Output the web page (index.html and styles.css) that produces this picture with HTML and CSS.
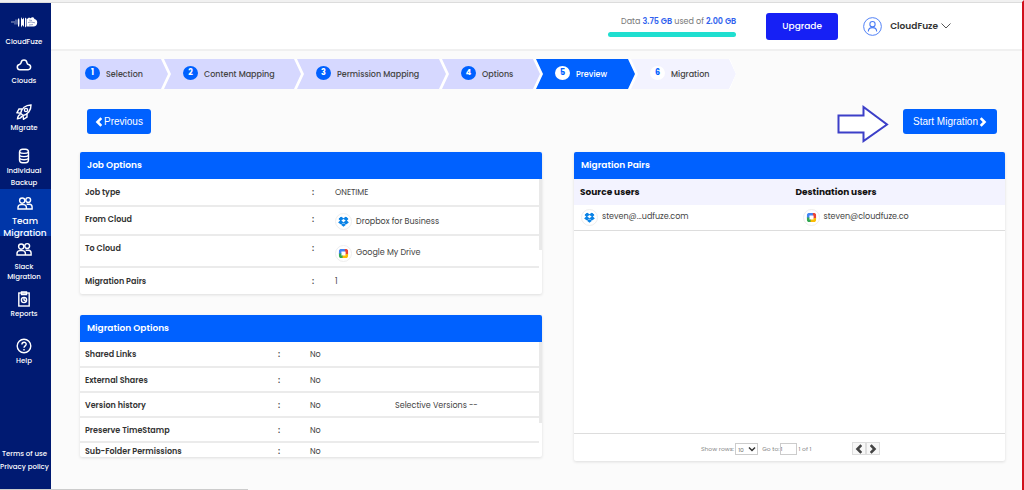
FILE: index.html
```html
<!DOCTYPE html>
<html lang="en">
<head>
<meta charset="utf-8">
<meta name="viewport" content="width=device-width, initial-scale=1">
<title>CloudFuze - Preview</title>
<link rel="stylesheet" href="styles.css">
</head>
<body>
<svg class="sprite" aria-hidden="true">
  <symbol id="team" viewBox="0 0 16 16">
    <g fill="none" stroke="currentColor" stroke-width="1.4">
      <circle cx="5.2" cy="5.6" r="2.6"/><circle cx="11.2" cy="5" r="2.4"/>
      <path d="M1 14v-1.400c0-2 1.400-3 3-3h2.400c1.800 0 3 1 3 3V14zM9.600 9.200h2.800c1.700 0 2.700 1 2.700 2.800V14H9.500"/>
    </g>
  </symbol>
  <symbol id="dropbox" viewBox="0 0 12 12">
    <path fill="#0b83e6" d="M3.300.6 6 2.500 8.700.6 12 3 9.600 5 12 7.200 8.700 9.300 6 7.300 3.300 9.300 0 7.200 2.400 5 0 3z"/>
    <path fill="#0b83e6" d="M3.300 9.500 6 7.800l2.700 1.700L6 11.700z"/>
    <path fill="#fff" d="M6 3.200 8.400 5 6 6.700 3.600 5z"/>
  </symbol>
  <symbol id="drive" viewBox="0 0 12 12">
    <path fill="#4285f4" d="M1 1H8V3.700H3.700v3H1z"/>
    <path fill="#ea4335" d="M7.500 1H11V7H8.300V3.700h-.8z"/>
    <path fill="#34a853" d="M1 6h2.700v2.300H5.500V11H1z"/>
    <path fill="#fbbc04" d="M5 8.300h3.300V6.500H11V11H5z"/>
  </symbol>
  <symbol id="left" viewBox="0 0 8 10"><path d="M6.300 1.200 2.500 5 6.300 8.800" fill="none" stroke="currentColor" stroke-width="2.600"/></symbol>
  <symbol id="right" viewBox="0 0 8 10"><path d="M1.700 1.200 5.500 5 1.700 8.800" fill="none" stroke="currentColor" stroke-width="2.600"/></symbol>
</svg>

<div class="app">
  <nav class="sidebar">
    <a class="nav brand" href="#">
      <svg class="logo" viewBox="0 0 28 14" fill="currentColor">
        <path d="M1 6.500h9v1H1zM4 8.500h6v.7H4zM5 4.800h5v.7H5z" opacity=".6"/>
        <path d="M8 3.500h1.200v8H8zM11 2l1.500 2.500L14 2.500v9.500l-1.500-2L11 12.500zM15 2.500l1.500 1.300v7.500L15 12.500z"/>
        <path d="M17 11.500V4l2-1.500 1.500.8C22 1.500 24 2 24.400 4c2 .3 2.800 2 2.800 3.500 0 2.500-1.500 4-3.700 4z"/>
        <path d="M18 7.500l3-.5 4 .8M19 5l3 .5M19 10l4-.4" fill="none" stroke="#001a72" stroke-width=".4"/>
      </svg>
      <span>CloudFuze</span>
    </a>
    <a class="nav nav-clouds" href="#">
      <svg class="icon" viewBox="0 0 16 16"><path d="M3.800 12.800a2.700 2.700 0 0 1-.5-5.300C4.600 7 4.900 6.500 5 5.800 5.300 4 6.500 3 8 3s2.700 1 3 2.800c.1.800.5 1.300 1.600 1.700a2.700 2.700 0 0 1-.4 5.300z" fill="none" stroke="currentColor" stroke-width="1.500"/></svg>
      <span>Clouds</span>
    </a>
    <a class="nav nav-migrate" href="#">
      <svg class="icon" viewBox="0 0 16 16"><g fill="none" stroke="currentColor" stroke-width="1.400"><path d="M4.700 9.200C5.500 4.500 9.500 1.200 15 1 15.200 6.500 11.500 10.500 7 11.500z"/><circle cx="10" cy="6" r="1.600"/><path d="M6 5H3L1 8.700l3.700.5M11 10v3l-3.500 2.300L7 11.500M4.700 10.500c-1.800.3-2.900 1.900-3.200 4.200 2 0 3.900-.8 4.400-2.800"/></g></svg>
      <span>Migrate</span>
    </a>
    <a class="nav nav-backup" href="#">
      <svg class="icon" viewBox="0 0 16 16"><g fill="none" stroke="currentColor" stroke-width="1.400"><rect x="3.500" y="1.200" width="9" height="13.600" rx="3"/><path d="M3.500 4.200c1.500 1.600 7.500 1.600 9 0M3.500 7.400c1.500 1.600 7.500 1.600 9 0M3.500 10.600c1.500 1.600 7.500 1.600 9 0"/></g></svg>
      <span>Individual Backup</span>
    </a>
    <a class="nav nav-team" href="#" aria-current="page">
      <svg class="icon"><use href="#team"/></svg>
      <span>Team Migration</span>
    </a>
    <a class="nav nav-slack" href="#">
      <svg class="icon"><use href="#team"/></svg>
      <span>Slack Migration</span>
    </a>
    <a class="nav nav-reports" href="#">
      <svg class="icon" viewBox="0 0 16 16"><g fill="none" stroke="currentColor" stroke-width="1.400"><rect x="2.800" y="2" width="10.400" height="13"/><path d="M5.500 1h5v2.500h-5z"/><circle cx="8" cy="9" r="2.600"/><path d="M8 6.500V9l2 1.500"/></g></svg>
      <span>Reports</span>
    </a>
    <a class="nav nav-help" href="#">
      <svg class="icon" viewBox="0 0 16 16"><g fill="none" stroke="currentColor" stroke-width="1.400"><circle cx="8" cy="8" r="6.800"/><path d="M5.900 6.500c0-3 4.300-2.900 4.300-.2C10.200 8 8 7.800 8 9.800M8 11v1.500"/></g></svg>
      <span>Help</span>
    </a>
    <div class="legal">
      <a href="#">Terms of use</a>
      <a href="#">Privacy policy</a>
    </div>
  </nav>

  <div class="page">
    <header class="topbar">
      <div class="usage">
        <span>Data <b>3.75 GB</b> used of <b>2.00 GB</b></span>
        <div class="meter"></div>
      </div>
      <button class="upgrade" type="button">Upgrade</button>
      <button class="account" type="button">
        <svg class="avatar" viewBox="0 0 18 18" fill="none" stroke="#4a7cf5"><circle cx="9" cy="9" r="8.400" stroke-width=".9"/><circle cx="9" cy="6.800" r="2.500"/><path d="M5 13.800c.2-5 7.800-5 8 0"/></svg>
        <span>CloudFuze</span>
        <svg class="caret" viewBox="0 0 10 6"><path d="M.5.500 5 5 9.500.500" fill="none" stroke="#555"/></svg>
      </button>
    </header>

    <main>
      <ol class="steps">
        <li class="step s1"><span class="num">1</span>Selection</li>
        <li class="step s2"><span class="num">2</span>Content Mapping</li>
        <li class="step s3"><span class="num">3</span>Permission Mapping</li>
        <li class="step s4"><span class="num">4</span>Options</li>
        <li class="step s5 current" aria-current="step"><span class="num">5</span>Preview</li>
        <li class="step s6 upcoming"><span class="num">6</span>Migration</li>
      </ol>

      <div class="actions">
        <button class="btn" type="button"><svg class="chev"><use href="#left"/></svg>Previous</button>
        <svg class="pointer" viewBox="0 0 52 38"><path d="M1.500 10.500h25v-8.500L50 19.500 26.500 36V27.500h-25z" fill="#fff" stroke="#3c3fc8" stroke-width="2"/></svg>
        <button class="btn start" type="button">Start Migration<svg class="chev"><use href="#right"/></svg></button>
      </div>

      <div class="columns">
        <div class="stack">
          <section class="panel">
            <h2>Job Options</h2>
            <div class="body">
              <table class="job">
                <tr class="r1"><th scope="row">Job type</th><td class="colon">:</td><td>ONETIME</td></tr>
                <tr class="r2"><th scope="row">From Cloud</th><td class="colon">:</td><td><span class="cloud"><svg class="badge"><use href="#dropbox"/></svg>Dropbox for Business</span></td></tr>
                <tr class="r3"><th scope="row">To Cloud</th><td class="colon">:</td><td><span class="cloud"><svg class="badge"><use href="#drive"/></svg>Google My Drive</span></td></tr>
                <tr class="r4"><th scope="row">Migration Pairs</th><td class="colon">:</td><td>1</td></tr>
              </table>
              <div class="scroll"></div>
            </div>
          </section>
          <section class="panel">
            <h2>Migration Options</h2>
            <div class="body">
              <table class="options">
                <tr><th scope="row">Shared Links</th><td class="colon">:</td><td class="value">No</td><td></td></tr>
                <tr><th scope="row">External Shares</th><td class="colon">:</td><td class="value">No</td><td></td></tr>
                <tr><th scope="row">Version history</th><td class="colon">:</td><td class="value">No</td><td>Selective Versions --</td></tr>
                <tr><th scope="row">Preserve TimeStamp</th><td class="colon">:</td><td class="value">No</td><td></td></tr>
                <tr class="last"><th scope="row">Sub-Folder Permissions</th><td class="colon">:</td><td class="value">No</td><td></td></tr>
              </table>
              <div class="scroll tall"></div>
            </div>
          </section>
        </div>

        <section class="panel pairs">
          <h2>Migration Pairs</h2>
          <table class="users">
            <thead><tr><th scope="col">Source users</th><th scope="col">Destination users</th></tr></thead>
            <tbody><tr>
              <td><span class="cloud"><svg class="badge"><use href="#dropbox"/></svg>steven@...udfuze.com</span></td>
              <td><span class="cloud inset"><svg class="badge"><use href="#drive"/></svg>steven@cloudfuze.co</span></td>
            </tr></tbody>
          </table>
          <footer class="pager">
            <label for="rows">Show rows:</label>
            <span class="select"><select id="rows"><option>10</option></select><svg viewBox="0 0 8 6"><path d="M1 1.500 4 4.500 7 1.500" fill="none" stroke="#333" stroke-width="1.500"/></svg></span>
            <label class="goto" for="page">Go to:</label>
            <input id="page" type="text" value="1">
            <span class="total">1 of 1</span>
            <div class="turn">
              <button type="button" aria-label="Previous page"><svg><use href="#left"/></svg></button>
              <button type="button" aria-label="Next page"><svg><use href="#right"/></svg></button>
            </div>
          </footer>
        </section>
      </div>
    </main>
  </div>
</div>
<div class="status"></div>
</body>
</html>
```

FILE: styles.css
```css
* { box-sizing: border-box; }
body {
  margin: 0;
  min-height: 100vh;
  display: flex;
  flex-direction: column;
  background: #fbfbfb;
  border-top: 2px solid #f1f1f1;
  border-right: 2px solid #d0101c;
  font: 8px/12px Poppins, Inter, sans-serif;
  color: #444;
}
a { color: inherit; text-decoration: none; }
button, input, select { font: inherit; margin: 0; padding: 0; border: 0; }
h2, ol { margin: 0; padding: 0; }
svg { display: block; flex: none; }
.sprite { position: absolute; width: 0; height: 0; }
.app { flex: 1; display: flex; border-top: 1px solid #dcdcdc; }

/* Sidebar */
.sidebar {
  flex: none;
  width: 51px;
  display: flex;
  flex-direction: column;
  background: #001a72;
  color: #fff;
  font-size: 7px;
  font-weight: 500;
  text-align: center;
}
.nav { display: flex; flex-direction: column; align-items: center; padding-right: 3px; gap: 1px; }
.icon { width: 16px; height: 16px; }
.brand { margin-top: 12px; }
.logo { width: 28px; height: 14px; margin-bottom: 6px; }
.nav-clouds { margin-top: 9px; gap: 2px; }
.nav-migrate { margin-top: 17px; gap: 2px; }
.nav-backup { margin-top: 14px; }
.nav-team { padding: 6px 1px 0 0; gap: 4px; height: 47px; background: #0036a8; font-size: 9px; }
.nav-slack { margin-top: 5px; gap: 5px; line-height: 10px; }
.nav-reports { margin-top: 9px; }
.nav-help { margin-top: 18px; }
.legal { margin-top: auto; padding: 0 2px 17px 0; display: flex; flex-direction: column; line-height: 13px; white-space: nowrap; }

/* Top bar */
.page { flex: 1; min-width: 0; }
.topbar {
  display: flex;
  align-items: center;
  justify-content: flex-end;
  height: 48px;
  padding-right: 71px;
  background: #fff;
  border-bottom: 2px solid #f0f0f0;
}
.usage { width: 128px; text-align: right; color: #777; white-space: nowrap; }
.usage b { color: #2f62ee; font-weight: 600; }
.meter { height: 5px; margin-top: 4px; border-radius: 3px; background: #1fdfd0; }
.upgrade { width: 72px; height: 27px; margin: 0 25px 0 30px; border-radius: 3px; background: #1620f5; color: #fff; font-size: 9px; font-weight: 500; }
.account { display: flex; align-items: center; background: none; color: #333; font-weight: 600; font-size: 9px; }
.avatar { width: 19px; height: 19px; margin-right: 8px; }
.caret { width: 10px; height: 6px; margin-left: 3px; }

main { padding: 8px 17px 28px 29px; }

/* Wizard steps */
.steps {
  display: flex;
  width: max-content;
  list-style: none;
  background: #fff;
  clip-path: polygon(0 0, calc(100% - 6px) 0, 100% 50%, calc(100% - 6px) 100%, 0 100%);
}
.step {
  display: flex;
  align-items: center;
  height: 30px;
  margin-left: -4px;
  padding: 2px 0 0 19px;
  background: #d6d8ff;
  font-weight: 500;
  white-space: nowrap;
  clip-path: polygon(0 0, calc(100% - 7px) 0, 100% 50%, calc(100% - 7px) 100%, 0 100%, 7px 50%);
}
.num {
  width: 15px;
  height: 14px;
  margin: 0 6px 4px 0;
  border-radius: 50%;
  background: #0061ff;
  color: #fff;
  font-weight: 700;
  line-height: 14px;
  text-align: center;
}
.s1 { width: 88px; margin-left: 0; padding-left: 5px; clip-path: polygon(0 0, calc(100% - 7px) 0, 100% 50%, calc(100% - 7px) 100%, 0 100%); }
.s2 { width: 137px; }
.s3 { width: 149px; }
.s4 { width: 98px; }
.s5 { width: 99px; }
.s6 { width: 105px; }
.current { background: #0061ff; color: #fff; }
.upcoming { background: #f3f3ff; }
.current .num, .upcoming .num { background: #fff; color: #0061ff; }

/* Actions */
.actions { display: flex; align-items: flex-start; padding: 0 8px 0 7px; margin: 16px 0 9px; }
.btn {
  display: flex;
  align-items: center;
  gap: 1px;
  height: 25px;
  margin-top: 4px;
  padding: 0 8px;
  border-radius: 3px;
  background: #0061ff;
  color: #fff;
  font: 10px/12px "Liberation Sans", Arial, sans-serif;
}
.start { padding: 0 10px; }
.chev { width: 8px; height: 10px; }
.pointer { width: 52px; height: 38px; margin: 0 14px 0 auto; }

/* Panels */
.columns { display: grid; grid-template-columns: 462fr 431fr; gap: 32px; }
.stack { display: flex; flex-direction: column; gap: 21px; padding-bottom: 4px; }
.panel { background: #fff; border-radius: 2px; box-shadow: 0 1px 3px #ddd; overflow: hidden; }
h2 { padding: 0 7px; background: #0061ff; color: #fff; font-size: 9px; font-weight: 600; line-height: 27px; }
.body { display: flex; align-items: flex-start; }
.scroll { flex: none; width: 3px; height: 71px; background: #e9e9e9; }
.tall { height: 81px; }
table { width: 100%; border-collapse: collapse; table-layout: fixed; }
th, td { padding: 0; text-align: left; font-weight: 400; white-space: nowrap; }
.body th, .body td { padding-top: 2px; }
.body th { padding-left: 5px; color: #333; font-weight: 600; }
.body .colon { padding-left: 1px; font-weight: 600; }
.body tr + tr { border-top: 2px solid #ebebeb; }
.job th { width: 231px; }
.job .colon { width: 24px; }
.r1 { height: 27px; }
.r2 { height: 29px; }
.r2 th, .r2 .colon { padding-bottom: 4px; }
.r3 { height: 32px; }
.r3 td { padding-top: 4px; }
.r3 th, .r3 .colon { padding-top: 2px; padding-bottom: 6px; }
.r4 { height: 27px; }
.options tr { height: 25px; }
.options .last { height: 15px; line-height: 10px; vertical-align: bottom; }
.options .last th, .options .last td { padding-top: 4px; }
.options th { width: 197px; }
.options .colon { width: 33px; }
.options .value { width: 85px; }
.cloud { display: flex; align-items: center; gap: 4px; }
.inset { margin-left: 6px; }
.badge { width: 17px; height: 17px; padding: 2px; border: 1px solid #eee; border-radius: 50%; background: #fff; }

/* User pairs */
.pairs { display: flex; flex-direction: column; }
.users th { height: 26px; padding-left: 6px; background: #f3f3ff; color: #111; font-size: 9px; font-weight: 700; }
.users td { height: 25px; padding-left: 7px; border-bottom: 1px solid #ddd; }
.pager {
  display: flex;
  align-items: center;
  height: 28px;
  margin-top: auto;
  padding: 2px 0 0 127px;
  border-top: 1px solid #ddd;
  color: #888;
  font-size: 6px;
}
.select { position: relative; margin: 0 4px 0 1px; }
.select svg { position: absolute; right: 2px; top: 3px; width: 8px; height: 6px; pointer-events: none; }
select { display: block; width: 23px; height: 12px; padding-left: 2px; appearance: none; border: 1px solid #ccc; background: #fff; color: #777; }
input { width: 17px; height: 12px; border: 1px solid #ccc; color: #777; }
.total { margin-left: 2px; }
.turn { display: flex; margin-left: 41px; }
.turn button { display: grid; place-items: center; width: 14px; height: 13px; border: 1px solid #ddd; background: #f7f7f7; color: #444; }
.turn svg { width: 8px; height: 10px; }

.status { position: absolute; left: 0; bottom: 0; width: 248px; height: 1px; background: #ccc; }
```
